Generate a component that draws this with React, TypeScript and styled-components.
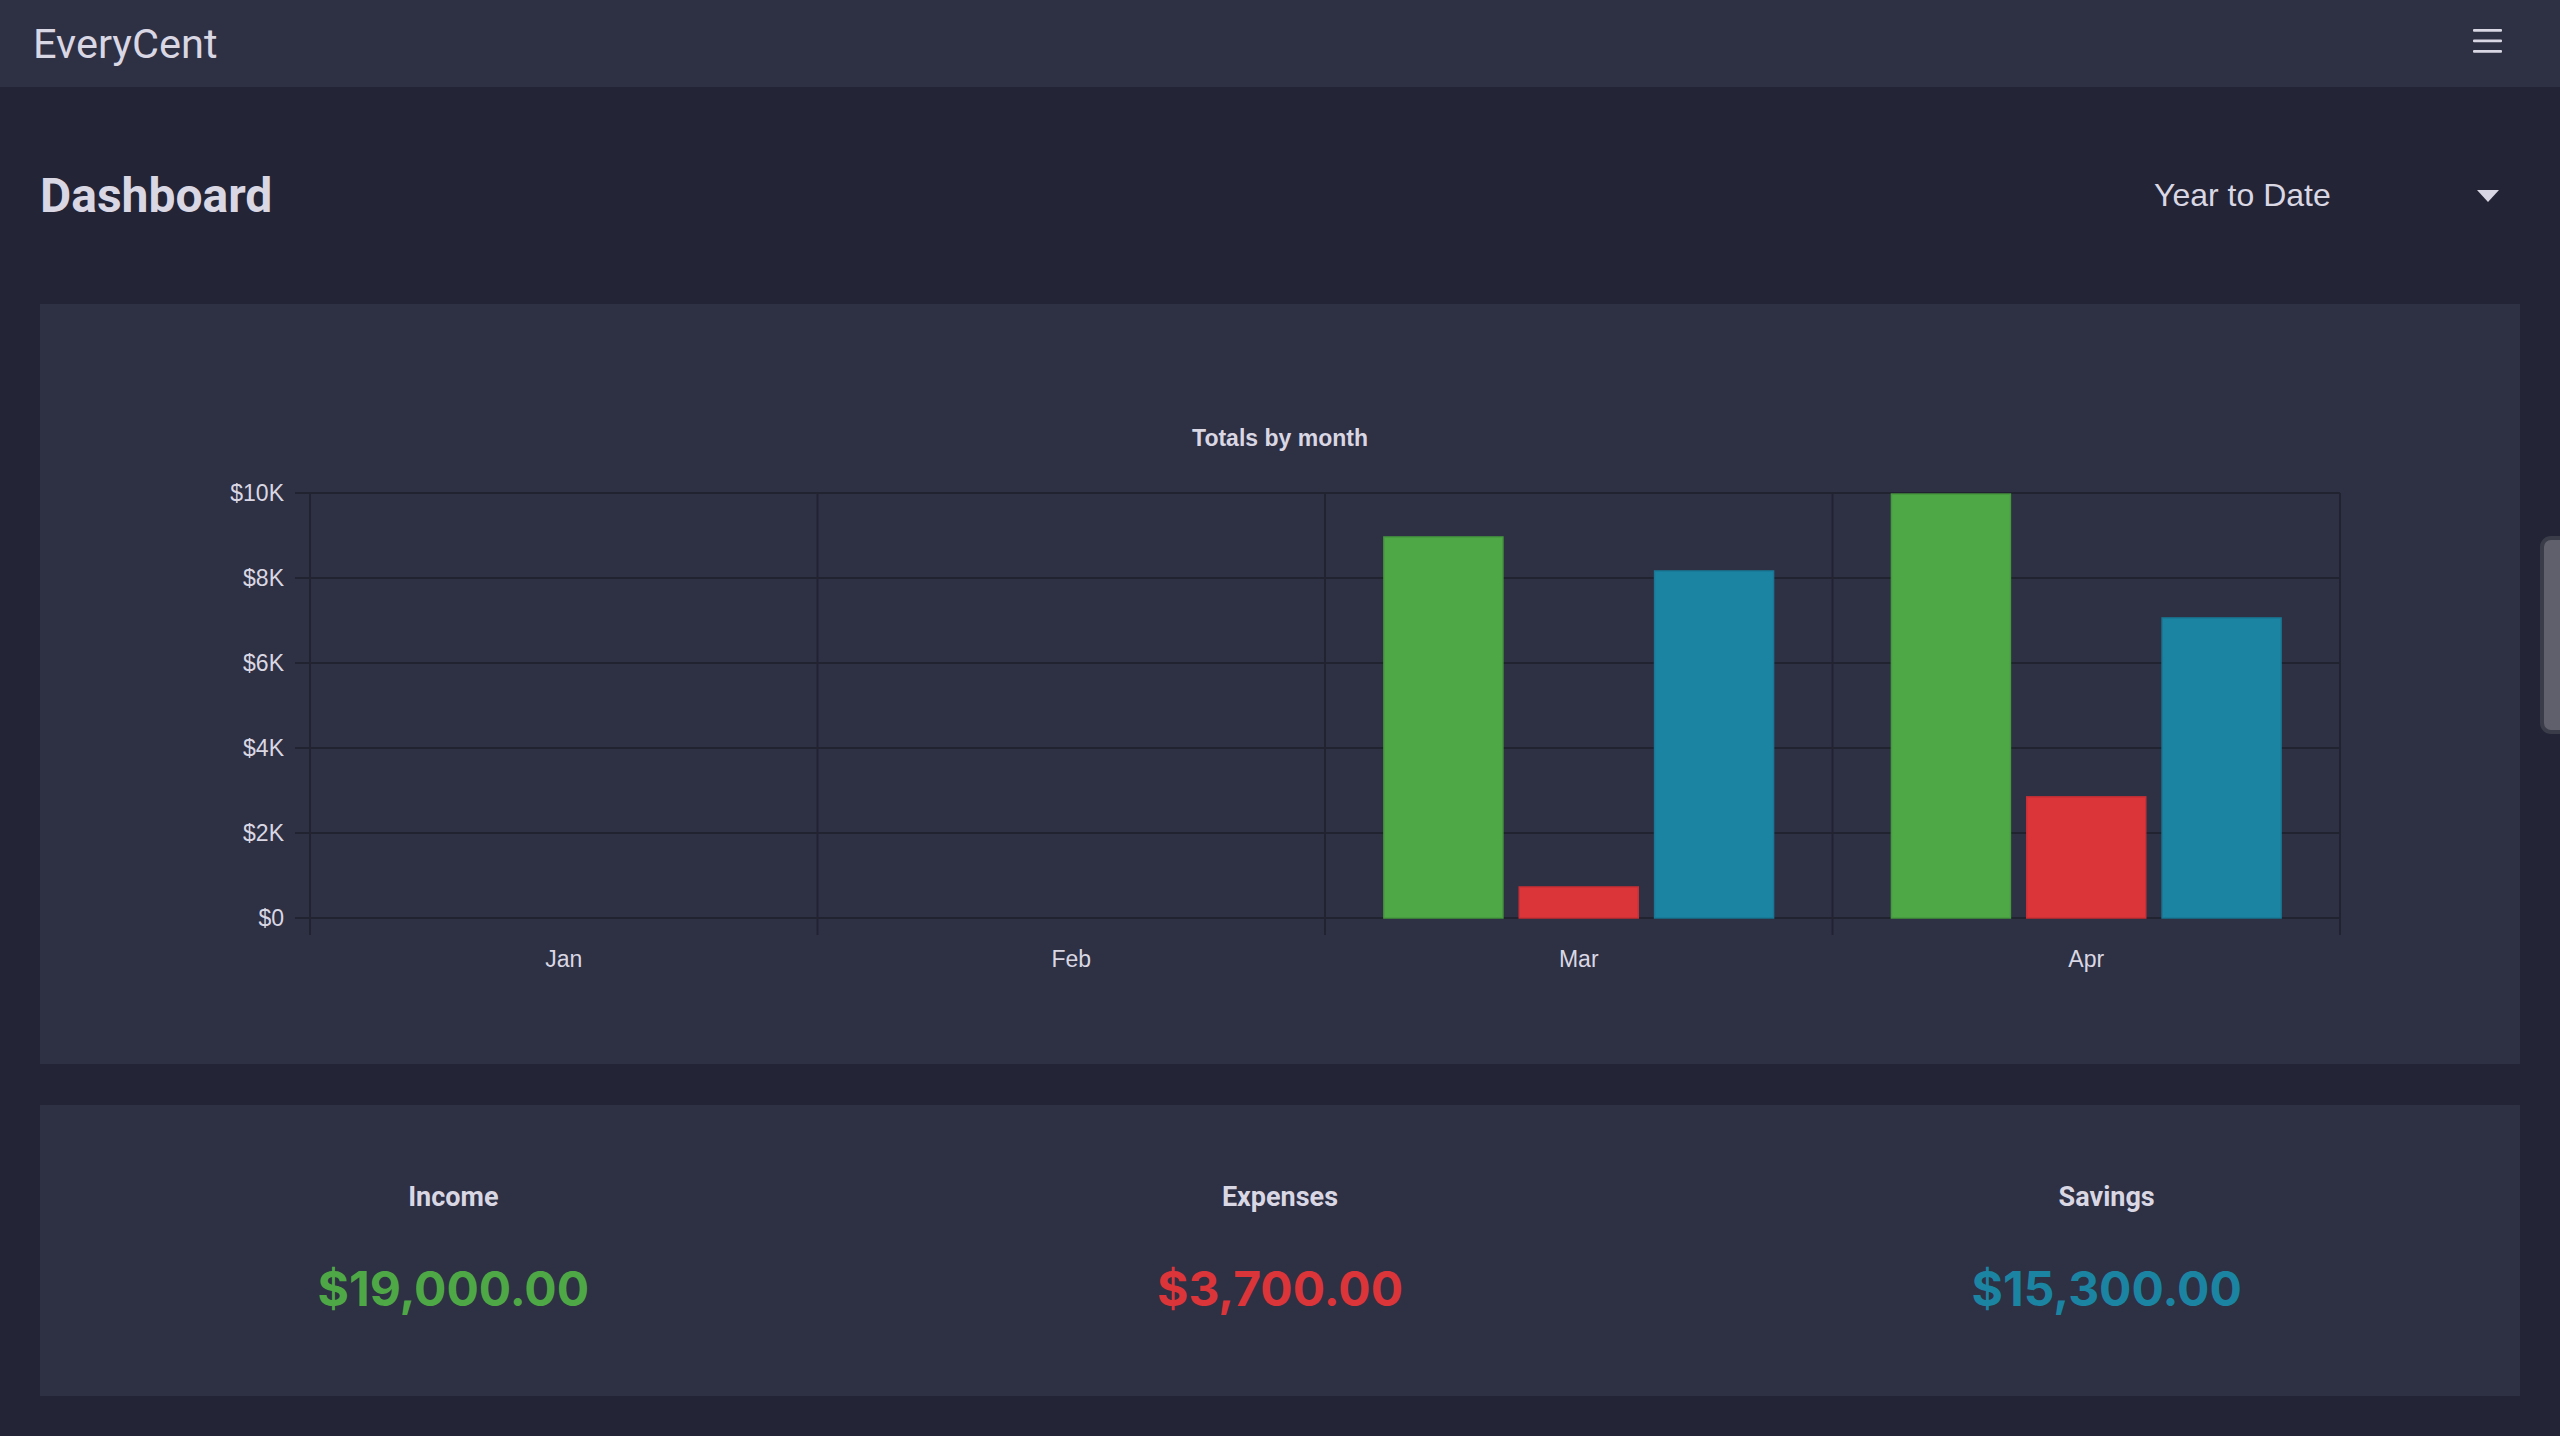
import React from "react";
import styled, { createGlobalStyle } from "styled-components";

const C = {
  page: "#232436",
  panel: "#2e3044",
  text: "#d9d7e3",
  grid: "#222331",
  green: "#4ea845",
  red: "#db353a",
  blue: "#1b84a2",
};

const GlobalStyle = createGlobalStyle`
  html, body {
    margin: 0;
    padding: 0;
    overflow: hidden;
    background: ${C.page};
    font-family: Roboto, "Noto Sans", sans-serif;
    color: ${C.text};
  }
  * { box-sizing: border-box; }
`;

const Page = styled.div`
  min-height: 1436px;
  background: ${C.page};
`;

const NavBar = styled.header`
  height: 87px;
  background: ${C.panel};
  display: flex;
  align-items: center;
  justify-content: space-between;
  padding: 0 58px 0 33px;
`;

const Brand = styled.div`
  font-family: Roboto, sans-serif;
  font-size: 41.5px;
  font-weight: 400;
  color: ${C.text};
  line-height: 1;
`;

const MenuButton = styled.button`
  background: none;
  border: none;
  padding: 0;
  margin-bottom: 5px;
  display: flex;
  cursor: pointer;
`;

const Main = styled.main`
  padding: 0 40px 40px;
`;

const HeaderRow = styled.div`
  height: 217px;
  display: flex;
  align-items: center;
  justify-content: space-between;
`;

const Title = styled.h1`
  margin: 0;
  font-family: Roboto, sans-serif;
  font-size: 48px;
  font-weight: 700;
  line-height: 1;
  color: ${C.text};
`;

const PeriodSelect = styled.div`
  width: 366px;
  display: flex;
  align-items: center;
  justify-content: space-between;
  padding-right: 21px;
  font-family: "Liberation Sans", Arial, sans-serif;
  font-size: 32px;
  color: ${C.text};
  cursor: pointer;
`;

const Card = styled.section`
  background: ${C.panel};
`;

const ChartCard = styled(Card)`
  height: 760px;
  svg { display: block; }
`;

const SummaryCard = styled(Card)`
  margin-top: 41px;
  height: 291px;
  padding-top: 79px;
  display: grid;
  grid-template-columns: repeat(3, 1fr);
`;

const SummaryItem = styled.div`
  display: flex;
  flex-direction: column;
  align-items: center;
  gap: 54px;
`;

const SummaryLabel = styled.div`
  font-family: Roboto, sans-serif;
  font-size: 27px;
  font-weight: 700;
  line-height: 1;
  color: ${C.text};
`;

const SummaryAmount = styled.div<{ $color: string }>`
  font-family: Inter, Roboto, sans-serif;
  font-size: 48px;
  font-weight: 700;
  line-height: 1;
  color: ${(p) => p.$color};
`;

const ScrollThumb = styled.div`
  position: fixed;
  top: 536px;
  right: -14px;
  width: 34px;
  height: 198px;
  background: #5f606c;
  border: 4px solid #3b3c49;
  border-radius: 11px;
`;

const ChartText = styled.text<{ $bold?: boolean }>`
  font-family: "Liberation Sans", Arial, Helvetica, sans-serif;
  font-size: 23px;
  font-weight: ${(p) => (p.$bold ? 700 : 400)};
  fill: ${C.text};
`;

const months = ["Jan", "Feb", "Mar", "Apr"];
const series = [
  { name: "Income", color: C.green, stroke: "#469a3e", values: [0, 0, 8965, 9975] },
  { name: "Expenses", color: C.red, stroke: "#c92f34", values: [0, 0, 730, 2850] },
  { name: "Savings", color: C.blue, stroke: "#187895", values: [0, 0, 8165, 7060] },
];

const G = {
  w: 2480,
  h: 760,
  left: 270,
  right: 2300,
  top: 189,
  bottom: 614,
  tickLeft: 255,
  tickBottom: 631,
  max: 10000,
  barWidth: 119,
};

function TotalsChart() {
  const plotW = G.right - G.left;
  const catW = plotW / months.length;
  const slot = (catW * 0.8) / series.length;
  const yOf = (v: number) => G.bottom - ((G.bottom - G.top) * v) / G.max;
  const yTicks = [0, 2000, 4000, 6000, 8000, 10000];
  const fmt = (v: number) => (v === 0 ? "$0" : `$${v / 1000}K`);

  return (
    <svg width="100%" height={G.h} viewBox={`0 0 ${G.w} ${G.h}`}>
      <ChartText $bold x={G.w / 2} y={142} textAnchor="middle">
        Totals by month
      </ChartText>

      {yTicks.map((t) => (
        <g key={t}>
          <line x1={G.tickLeft} x2={G.right} y1={yOf(t)} y2={yOf(t)} stroke={C.grid} strokeWidth={2} />
          <ChartText x={244} y={yOf(t) + 8} textAnchor="end">
            {fmt(t)}
          </ChartText>
        </g>
      ))}

      {[0, 1, 2, 3, 4].map((i) => {
        const x = G.left + catW * i;
        return <line key={i} x1={x} x2={x} y1={G.top} y2={G.tickBottom} stroke={C.grid} strokeWidth={2} />;
      })}

      {months.map((m, i) => {
        const cx = G.left + catW * (i + 0.5);
        return (
          <g key={m}>
            {series.map((s, j) => {
              const v = s.values[i];
              if (!v) return null;
              const bx = cx + (j - 1) * slot - G.barWidth / 2;
              const by = yOf(v);
              return (
                <rect
                  key={s.name}
                  x={bx}
                  y={by}
                  width={G.barWidth}
                  height={G.bottom - by}
                  fill={s.color}
                  stroke={s.stroke}
                  strokeWidth={1.5}
                />
              );
            })}
            <ChartText x={cx} y={663} textAnchor="middle">
              {m}
            </ChartText>
          </g>
        );
      })}
    </svg>
  );
}

const totals = [
  { label: "Income", amount: "$19,000.00", color: C.green },
  { label: "Expenses", amount: "$3,700.00", color: C.red },
  { label: "Savings", amount: "$15,300.00", color: C.blue },
];

export default function App() {
  return (
    <Page>
      <GlobalStyle />
      <NavBar>
        <Brand>EveryCent</Brand>
        <MenuButton aria-label="menu">
          <svg width="29" height="24" viewBox="0 0 29 24">
            <rect x="0" y="0" width="29" height="2.8" rx="1" fill={C.text} />
            <rect x="0" y="10.5" width="29" height="2.8" rx="1" fill={C.text} />
            <rect x="0" y="21" width="29" height="2.8" rx="1" fill={C.text} />
          </svg>
        </MenuButton>
      </NavBar>
      <Main>
        <HeaderRow>
          <Title>Dashboard</Title>
          <PeriodSelect>
            <span>Year to Date</span>
            <svg width="22" height="12" viewBox="0 0 22 12">
              <path d="M0 0 L22 0 L11 12 Z" fill={C.text} />
            </svg>
          </PeriodSelect>
        </HeaderRow>
        <ChartCard>
          <TotalsChart />
        </ChartCard>
        <SummaryCard>
          {totals.map((t) => (
            <SummaryItem key={t.label}>
              <SummaryLabel>{t.label}</SummaryLabel>
              <SummaryAmount $color={t.color}>{t.amount}</SummaryAmount>
            </SummaryItem>
          ))}
        </SummaryCard>
      </Main>
      <ScrollThumb />
    </Page>
  );
}
